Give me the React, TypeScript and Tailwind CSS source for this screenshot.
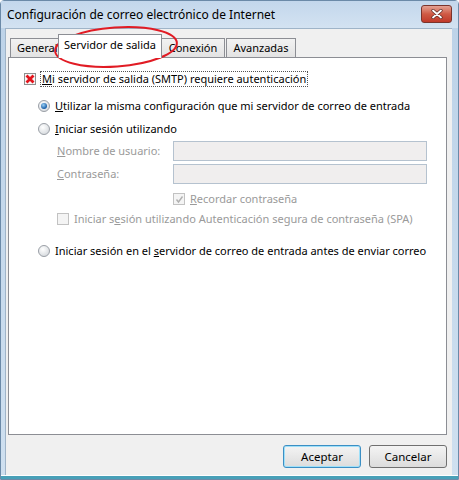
import React from "react";

const F = { fontFamily: '"Noto Sans", "Liberation Sans", sans-serif' };

function Radio({ checked }: { checked?: boolean }) {
  return (
    <svg width="12" height="12" viewBox="0 0 12 12" className="shrink-0">
      <defs>
        <radialGradient id="rg" cx="0.4" cy="0.35" r="0.7">
          <stop offset="0" stopColor="#ffffff" />
          <stop offset="1" stopColor="#d4d8dc" />
        </radialGradient>
        <radialGradient id="rd" cx="0.4" cy="0.35" r="0.6">
          <stop offset="0" stopColor="#9ad0f5" />
          <stop offset="1" stopColor="#1b5fa8" />
        </radialGradient>
      </defs>
      <circle cx="6" cy="6" r="5.5" fill="url(#rg)" stroke="#9a9fa6" strokeWidth="1" />
      {checked && <circle cx="6" cy="6" r="3" fill="url(#rd)" />}
    </svg>
  );
}

function Box({ children, disabled }: { children?: React.ReactNode; disabled?: boolean }) {
  return (
    <div
      className={`w-[12px] h-[12px] shrink-0 border flex items-center justify-center ${
        disabled ? "border-[#c2c2c2] bg-[#f4f4f4]" : "border-[#8e8f8f] bg-[#f6f6f6]"
      }`}
    >
      {children}
    </div>
  );
}

export default function App() {
  return (
    <div style={F} className="relative w-[459px] h-[480px] overflow-hidden bg-white">
      <div className="w-[459px] h-[480px] flex flex-col bg-gradient-to-b from-[#bcd2e8] to-[#cfe0f0] border border-[#6b8aa8] rounded-t-[4px]">
        {/* Title bar */}
        <div className="h-[27px] shrink-0 flex items-center justify-between pl-[6px] pr-[6px] bg-gradient-to-b from-[#c3d7ec] to-[#d3e2f1]">
          <span className="text-[12px] text-black leading-none whitespace-nowrap">
            Configuración de correo electrónico de Internet
          </span>
          <div className="w-[31px] h-[18px] mb-[2px] rounded-[3px] border border-[#7a342c] bg-gradient-to-b from-[#e3a193] via-[#cf5a45] to-[#c0392a] flex items-center justify-center">
            <svg width="12" height="10" viewBox="0 0 12 10">
              <path d="M2 1.5 L10 8.5 M10 1.5 L2 8.5" stroke="#5a2a25" strokeWidth="3.2" strokeLinecap="round" />
              <path d="M2 1.5 L10 8.5 M10 1.5 L2 8.5" stroke="#ffffff" strokeWidth="1.8" strokeLinecap="round" />
            </svg>
          </div>
        </div>

        {/* Client area */}
        <div className="flex-1 flex flex-col ml-[4px] mr-[6px] bg-[#f0f0f0] border-l border-t border-[#9fb4c8] pl-[2px] pr-[5px] pt-[4px]">
          {/* Tabs */}
          <div className="relative h-[24px] flex items-end text-[11px] text-black">
            <div className="h-[19px] w-[50px] ml-[2px] border border-b-0 border-[#8c8e94] bg-gradient-to-b from-[#f2f2f2] to-[#e3e3e3] flex items-center pl-[6px] overflow-hidden whitespace-nowrap">
              General
            </div>
            <div className="relative z-10 h-[24px] w-[104px] -ml-[2px] -mb-[1px] border border-b-0 border-[#8c8e94] bg-white flex items-start justify-center pt-[2px] whitespace-nowrap">
              Servidor de salida
            </div>
            <div className="h-[19px] w-[64px] -ml-[1px] border border-b-0 border-[#8c8e94] bg-gradient-to-b from-[#f2f2f2] to-[#e3e3e3] flex items-center justify-center whitespace-nowrap">
              Conexión
            </div>
            <div className="h-[19px] w-[70px] ml-[1px] border border-b-0 border-[#8c8e94] bg-gradient-to-b from-[#f2f2f2] to-[#e3e3e3] flex items-center justify-center whitespace-nowrap">
              Avanzadas
            </div>
          </div>

          {/* Panel */}
          <div className="h-[378px] border border-[#8c8e94] bg-white text-[11px] text-black pl-[15px] pr-[10px] pt-[13px] whitespace-nowrap">
            <div className="flex items-center gap-[4px] h-[16px]">
              <Box>
                <svg width="10" height="10" viewBox="0 0 10 10">
                  <path d="M1.5 1.5 L8.5 8.5 M8.5 1.5 L1.5 8.5" stroke="#e3141c" strokeWidth="2.8" />
                </svg>
              </Box>
              <span className="border border-dotted border-[#555] px-[1px] leading-[14px]">
                <span className="underline">M</span>i servidor de salida (SMTP) requiere autenticación
              </span>
            </div>

            <div className="pl-[14px] mt-[11px] flex flex-col">
              <div className="flex items-center gap-[5px] h-[16px]">
                <Radio checked />
                <span>
                  <span className="underline">U</span>tilizar la misma configuración que mi servidor de correo de entrada
                </span>
              </div>
              <div className="flex items-center gap-[5px] h-[16px] mt-[7px]">
                <Radio />
                <span>
                  <span className="underline">I</span>niciar sesión utilizando
                </span>
              </div>

              <div className="pl-[19px] mt-[4px] flex flex-col gap-[3px] text-[#9a9a9a]">
                <div className="flex items-center h-[20px]">
                  <span className="w-[116px]">
                    <span className="underline">N</span>ombre de usuario:
                  </span>
                  <div className="h-[20px] w-[254px] border border-[#b5c2cf] bg-[#f0eeee]" />
                </div>
                <div className="flex items-center h-[20px]">
                  <span className="w-[116px]">
                    <span className="underline">C</span>ontraseña:
                  </span>
                  <div className="h-[20px] w-[254px] border border-[#b5c2cf] bg-[#f0eeee]" />
                </div>
                <div className="flex items-center gap-[5px] h-[16px] mt-[4px] pl-[116px]">
                  <Box disabled>
                    <svg width="9" height="9" viewBox="0 0 9 9">
                      <path d="M1.5 4.5 L3.5 7 L7.5 1.5" stroke="#b0b0b0" strokeWidth="1.4" fill="none" />
                    </svg>
                  </Box>
                  <span>
                    <span className="underline">R</span>ecordar contraseña
                  </span>
                </div>
                <div className="flex items-center gap-[5px] h-[16px] mt-[1px]">
                  <Box disabled />
                  <span>
                    Iniciar s<span className="underline">e</span>sión utilizando Autenticación segura de contraseña (SPA)
                  </span>
                </div>
              </div>

              <div className="flex items-center gap-[5px] h-[16px] mt-[16px]">
                <Radio />
                <span>
                  Iniciar sesión en el <span className="underline">s</span>ervidor de correo de entrada antes de enviar correo
                </span>
              </div>
            </div>
          </div>

          {/* Buttons */}
          <div className="flex justify-end gap-[8px] mt-[10px] pr-0 text-[11.5px]">
            <button className="w-[78px] h-[23px] rounded-[3px] border border-[#3c8fc4] shadow-[inset_0_0_0_1px_#9fe0f9] bg-gradient-to-b from-[#f4f4f4] to-[#dcdcdc] text-black">
              Aceptar
            </button>
            <button className="w-[78px] h-[23px] rounded-[3px] border border-[#707070] bg-gradient-to-b from-[#f4f4f4] to-[#dcdcdc] text-black">
              Cancelar
            </button>
          </div>
        </div>
        <div className="h-[4px] shrink-0 border-t border-white bg-[#48a0b8]" />
      </div>

      {/* Red annotation ellipse */}
      <svg className="absolute left-0 top-0 pointer-events-none" width="459" height="480">
        <ellipse
          cx="116"
          cy="47"
          rx="61"
          ry="19.5"
          fill="none"
          stroke="#e11b24"
          strokeWidth="2"
          transform="rotate(-4 116 47)"
        />
      </svg>
    </div>
  );
}
